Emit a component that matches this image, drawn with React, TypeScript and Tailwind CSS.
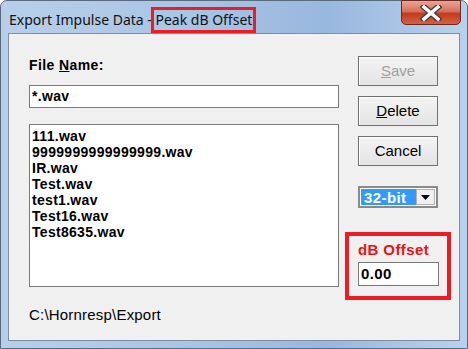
export default function App() {
  const files = [
    '111.wav',
    '9999999999999999.wav',
    'IR.wav',
    'Test.wav',
    'test1.wav',
    'Test16.wav',
    'Test8635.wav',
  ];

  return (
    <div className="w-[468px] h-[349px] overflow-hidden bg-white">
      {/* Window frame */}
      <div className="w-[468px] h-[349px] flex flex-col rounded-t-[7px] border border-[#5a6b80] bg-[linear-gradient(90deg,#b7cfe9_0%,#a9c5e5_40%,#99b8de_70%,#b9d1ec_100%)]">
        {/* Title bar */}
        <div className="h-[32px] flex items-start shrink-0">
          <div className="pl-[8px] pt-[6px] flex items-center font-['Noto_Sans',sans-serif] text-[14px] leading-[20px] text-[#111]">
            <span className="whitespace-pre">Export Impulse Data - </span>
            <span className="border-[3px] border-[#ed1c24] px-[1px] -ml-[4px] h-[26px] leading-[20px] whitespace-pre">Peak dB Offset</span>
          </div>
          <div className="ml-auto mr-[6px] -mt-px w-[60px] h-[25px] rounded-b-[5px] border border-[#6a2a22] bg-[linear-gradient(180deg,#e9a597_0%,#d6705e_45%,#c23a1f_55%,#d4623f_100%)] flex items-center justify-center">
            <svg width="22" height="16" viewBox="0 0 22 16">
              <path d="M4 2 L18 14 M18 2 L4 14" stroke="#3a3a3a" strokeWidth="6" strokeLinecap="square" />
              <path d="M4 2 L18 14 M18 2 L4 14" stroke="#ffffff" strokeWidth="3.5" strokeLinecap="square" />
            </svg>
          </div>
        </div>

        {/* Client area */}
        <div className="mx-[7px] h-[308px] border border-[#7b8ea5] bg-[#f0f0f0] flex font-['Liberation_Sans',Arial,sans-serif]">
          {/* Left column */}
          <div className="pl-[20px] pt-[23px] w-[331px] flex flex-col">
            <div className="text-[14px] leading-[16px] font-bold tracking-[0.4px] text-black">
              File <span className="underline">N</span>ame:
            </div>
            <div className="mt-[12px] h-[23px] w-[310px] border border-[#7a7a7a] bg-white px-[2px] text-[14px] leading-[20px] font-bold tracking-[0.3px] text-black">
              *.wav
            </div>
            <div className="mt-[16px] h-[163px] w-[310px] border border-[#7a7a7a] bg-white pl-[2px] pt-[3px] text-[14px] leading-[16px] font-bold tracking-[0.3px] text-black">
              {files.map((f) => (
                <div key={f}>{f}</div>
              ))}
            </div>
            <div className="mt-[20px] text-[15px] leading-[16px] tracking-[0.2px] text-black">C:\Hornresp\Export</div>
          </div>

          {/* Right column */}
          <div className="pl-[18px] pt-[22px] flex flex-col">
            <button className="w-[80px] h-[30px] border border-[#707070] bg-[linear-gradient(180deg,#f4f4f4,#e4e4e4)] text-[15px] text-[#a0a0a0] shadow-[inset_1px_1px_0_#fff]">
              <span className="underline">S</span>ave
            </button>
            <button className="mt-[10px] w-[80px] h-[30px] border border-[#707070] bg-[linear-gradient(180deg,#f4f4f4,#e4e4e4)] text-[15px] text-black shadow-[inset_1px_1px_0_#fff]">
              <span className="underline">D</span>elete
            </button>
            <button className="mt-[10px] w-[80px] h-[30px] border border-[#707070] bg-[linear-gradient(180deg,#f4f4f4,#e4e4e4)] text-[15px] text-black shadow-[inset_1px_1px_0_#fff]">
              Cancel
            </button>

            {/* Bit depth combo */}
            <div className="mt-[20px] w-[80px] h-[22px] border-2 border-[#8a8a8a] bg-white flex p-px">
              <div className="flex-1 bg-[#3399ff] border border-dotted border-[#c08000] text-white text-[15px] leading-[16px] font-bold pl-[2px] tracking-[0.4px]">
                32-bit
              </div>
              <div className="w-[19px] border border-[#b0b0b0] bg-[#f0f0f0] flex items-center justify-center">
                <svg width="9" height="5" viewBox="0 0 9 5">
                  <path d="M0 0 H9 L4.5 5 Z" fill="#000" />
                </svg>
              </div>
            </div>

            {/* dB offset highlighted */}
            <div className="mt-[24px] -ml-[13px] w-[106px] h-[68px] border-4 border-[#ed1c24] pl-[9px] pt-[5px] flex flex-col">
              <div className="text-[15px] leading-[18px] font-bold text-[#ee1111] tracking-[0.4px]">dB Offset</div>
              <div className="mt-[3px] w-[81px] h-[24px] border border-[#7a7a7a] bg-white pl-[2px] text-[15px] leading-[22px] font-bold text-black tracking-[0.4px]">
                0.00
              </div>
            </div>
          </div>
        </div>
      </div>
    </div>
  );
}
